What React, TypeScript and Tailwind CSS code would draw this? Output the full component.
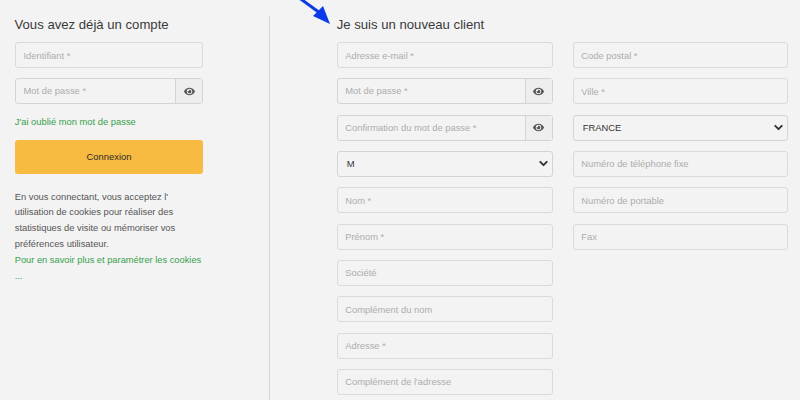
import React from "react";
import { ChevronDown } from "lucide-react";
import { FaEye } from "react-icons/fa";

function Field(props: { label: string }) {
  return (
    <input
      placeholder={props.label}
      className="block w-full h-[26px] shrink-0 rounded-[3px] border border-[#dadada] bg-[#f3f3f3] px-[7.5px] text-[9.4px] text-[#333] placeholder:text-[#adadad] outline-none"
    />
  );
}

function PasswordField(props: { label: string }) {
  return (
    <div className="flex h-[26px] w-full shrink-0 rounded-[3px] border border-[#d4d4d4] bg-[#f3f3f3]">
      <input
        placeholder={props.label}
        className="min-w-0 flex-1 bg-transparent px-[7.5px] text-[9.4px] placeholder:text-[#adadad] outline-none"
      />
      <div className="flex w-[27px] items-center justify-center border-l border-[#d4d4d4] bg-[#eeeeee]">
        <FaEye size={11} className="text-[#555]" />
      </div>
    </div>
  );
}

function SelectField(props: { value: string }) {
  return (
    <div className="relative h-[26px] w-full shrink-0">
      <select className="block h-full w-full appearance-none rounded-[3px] border border-[#d4d4d4] bg-[#f3f3f3] pl-[9px] text-[9.4px] text-[#333] outline-none">
        <option>{props.value}</option>
      </select>
      <ChevronDown size={13} strokeWidth={3.5} className="absolute right-[3px] top-[6px] text-[#333]" />
    </div>
  );
}

export default function App() {
  return (
    <div className="relative flex h-[400px] w-[800px] overflow-hidden bg-[#f3f3f3] font-['Liberation_Sans',Arial,sans-serif]">
      <svg className="absolute left-[298px] top-0" width="36" height="26" viewBox="0 0 36 26">
        <path d="M0 -3 L22 13" stroke="#0b3be8" strokeWidth="3" fill="none" />
        <path d="M32 24 L15 16 L25 6 Z" fill="#0b3be8" />
      </svg>

      <div className="w-[269px] shrink-0 pl-[15px] pt-[16px]">
        <h2 className="-ml-[0.5px] h-[26px] text-[13.15px] leading-[17px] text-[#3a3a3a]">Vous avez déjà un compte</h2>
        <div className="flex w-[188px] flex-col gap-[10.33px]">
          <Field label="Identifiant *" />
          <PasswordField label="Mot de passe *" />
        </div>
        <a className="-ml-[0.3px] mt-[10.7px] block text-[9.4px] leading-[14px] text-[#37a04c]">J'ai oublié mon mot de passe</a>
        <button className="mt-[11px] block h-[34px] w-[188px] rounded-[3px] bg-[#f8bb42] text-[9.4px] text-[#2a2a2a]">
          Connexion
        </button>
        <p className="-ml-[0.3px] mt-[15.5px] w-[195px] text-[9.35px] leading-[15.8px] text-[#555]">
          En vous connectant, vous acceptez l'
          <br />
          utilisation de cookies pour réaliser des
          <br />
          statistiques de visite ou mémoriser vos
          <br />
          préférences utilisateur.
        </p>
        <a className="-ml-[0.3px] block w-[195px] text-[9.3px] leading-[15.8px] text-[#37a04c]">
          Pour en savoir plus et paramétrer les cookies
          <br />
          ...
        </a>
      </div>

      <div className="mt-[16px] w-px shrink-0 bg-[#d4d4d4]" />

      <div className="ml-[66.7px] w-[216px] shrink-0 pt-[16px]">
        <h2 className="h-[26px] text-[13.15px] leading-[17px] text-[#3a3a3a]">Je suis un nouveau client</h2>
        <div className="flex flex-col gap-[10.33px]">
          <Field label="Adresse e-mail *" />
          <PasswordField label="Mot de passe *" />
          <PasswordField label="Confirmation du mot de passe *" />
          <SelectField value="M" />
          <Field label="Nom *" />
          <Field label="Prénom *" />
          <Field label="Société" />
          <Field label="Complément du nom" />
          <Field label="Adresse *" />
          <Field label="Complément de l'adresse" />
        </div>
      </div>

      <div className="ml-[20px] w-[215px] shrink-0 pt-[42px]">
        <div className="flex flex-col gap-[10.33px]">
          <Field label="Code postal *" />
          <Field label="Ville *" />
          <SelectField value="FRANCE" />
          <Field label="Numéro de téléphone fixe" />
          <Field label="Numéro de portable" />
          <Field label="Fax" />
        </div>
      </div>
    </div>
  );
}
